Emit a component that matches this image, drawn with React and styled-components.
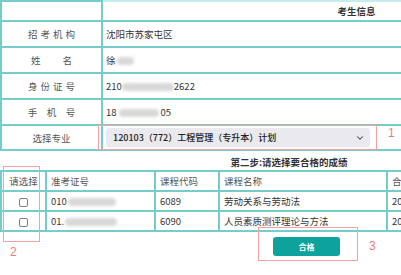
import React from "react";
import styled, { createGlobalStyle } from "styled-components";
import { ChevronDown } from "lucide-react";

const Global = createGlobalStyle`
  html, body { margin: 0; padding: 0; background: #fff; overflow: hidden; }
  body { font-family: "Noto Sans CJK SC", "Noto Sans", sans-serif; }
`;

const TEAL = "#74cccb";
const RED = "#f3a1a1";

const Page = styled.div`
  position: relative;
  width: 401px;
  height: 275px;
  overflow: hidden;
`;

const Sheet = styled.div`
  width: 612px;
  display: flex;
  flex-direction: column;
`;

const Table = styled.table`
  border-collapse: collapse;
  width: ${(p) => p.$w}px;
  table-layout: fixed;
  font-size: 9.5px;
  line-height: 12px;
  color: #333;
`;

const Cell = styled.td`
  border: 2px solid ${TEAL};
  height: ${(p) => p.$h || 22}px;
  padding: 0 0 0 ${(p) => p.$pl ?? 4}px;
  text-align: ${(p) => p.$align || "left"};
  vertical-align: middle;
  white-space: nowrap;
  overflow: hidden;
  color: ${(p) => (p.$muted ? "#555" : "#333")};
`;

const HeadCell = styled(Cell)`
  font-weight: 700;
  text-align: center;
  padding: 0;
  border-top-color: #c7ecec;
`;

const Label = styled.span`
  display: inline-block;
  letter-spacing: ${(p) => p.$ls || 0}px;
  padding-left: ${(p) => p.$ls || 0}px;
  color: #555;
`;

const Blur = styled.span`
  display: inline-block;
  width: ${(p) => p.$w}px;
  height: 8px;
  margin: 0 ${(p) => p.$m ?? 1}px;
  vertical-align: middle;
  background: #d8d8d8;
  border-radius: 4px;
  filter: blur(1.5px);
`;

const SelectBox = styled.div`
  width: 264px;
  height: 19px;
  box-sizing: border-box;
  display: flex;
  align-items: center;
  justify-content: space-between;
  padding: 0 5px 0 7px;
  background: #e9e9ee;
  border-radius: 3px;
  font-size: 9px;
  font-weight: 500;
  color: #222;
`;

const StepTitle = styled.div`
  width: 578px;
  text-align: center;
  font-size: 9.5px;
  font-weight: 700;
  color: #333;
  line-height: 12px;
  padding: 5px 0 2px;
`;

const Check = styled.span`
  display: inline-block;
  width: 7px;
  height: 7px;
  border: 1.5px solid #7d7d8a;
  border-radius: 2px;
  vertical-align: middle;
`;

const ButtonRow = styled.div`
  display: flex;
  justify-content: center;
  padding-top: 5px;
`;

const PassButton = styled.button`
  width: 67px;
  height: 19px;
  border: none;
  border-radius: 3px;
  background: #0da39c;
  color: #fff;
  font-family: inherit;
  font-size: 8px;
  font-weight: 700;
  padding: 0;
  margin-left: 1px;
`;

const Mark = styled.div`
  position: absolute;
  left: ${(p) => p.$x}px;
  top: ${(p) => p.$y}px;
  width: ${(p) => p.$w}px;
  height: ${(p) => p.$h}px;
  border: 1.5px solid ${RED};
  box-sizing: border-box;
  pointer-events: none;
`;

const Num = styled.div`
  position: absolute;
  left: ${(p) => p.$x}px;
  top: ${(p) => p.$y}px;
  color: #f27c7c;
  font-family: "Liberation Sans", sans-serif;
  font-size: 12px;
  line-height: 14px;
`;

const info = [
  { label: "招考机构", ls: 3, value: "沈阳市苏家屯区" },
  { label: "姓名", ls: 22, value: <>徐<Blur $w={17} /></> },
  { label: "身份证号", ls: 3, value: <>210<Blur $w={52} $m={0} />2622</> },
  { label: "手机号", ls: 9.5, value: <>18<Blur $w={40} $m={2} />05</> },
];

const rows = [
  { id: <>010<Blur $w={48} /></>, code: "6089", name: "劳动关系与劳动法" },
  { id: <>01.<Blur $w={52} /></>, code: "6090", name: "人员素质测评理论与方法" },
];

export default function App() {
  return (
    <Page>
      <Global />
      <Sheet>
        <Table $w={612}>
          <colgroup>
            <col style={{ width: 101 }} />
            <col />
          </colgroup>
          <tbody>
            <tr>
              <Cell $h={18} />
              <HeadCell $h={18} style={{ borderLeftColor: "transparent" }}>考生信息</HeadCell>
            </tr>
            {info.map((r) => (
              <tr key={r.label}>
                <Cell $h={24} $align="center" $pl={0}><Label $ls={r.ls}>{r.label}</Label></Cell>
                <Cell $h={24} $pl={3}>{r.value}</Cell>
              </tr>
            ))}
            <tr>
              <Cell $h={23} $align="center" $pl={0}><Label>选择专业</Label></Cell>
              <Cell $h={23} $pl={3}>
                <SelectBox>
                  <span>120103（772）工程管理（专升本）计划</span>
                  <ChevronDown size={10} strokeWidth={2.5} color="#444" />
                </SelectBox>
              </Cell>
            </tr>
          </tbody>
        </Table>
        <StepTitle>第二步:请选择要合格的成绩</StepTitle>
        <Table $w={612}>
          <colgroup>
            <col style={{ width: 45 }} />
            <col style={{ width: 109 }} />
            <col style={{ width: 64 }} />
            <col style={{ width: 168 }} />
            <col />
          </colgroup>
          <tbody>
            <tr>
              <Cell $h={18} $align="center" $pl={0} $muted>请选择</Cell>
              <Cell $h={18} $muted>准考证号</Cell>
              <Cell $h={18} $muted>课程代码</Cell>
              <Cell $h={18} $muted>课程名称</Cell>
              <Cell $h={18} $muted>合格时间</Cell>
            </tr>
            {rows.map((r) => (
              <tr key={r.code}>
                <Cell $h={18} $align="center" $pl={0}><Check /></Cell>
                <Cell $h={18}>{r.id}</Cell>
                <Cell $h={18}>{r.code}</Cell>
                <Cell $h={18}>{r.name}</Cell>
                <Cell $h={18}>2019-04</Cell>
              </tr>
            ))}
          </tbody>
        </Table>
        <ButtonRow>
          <PassButton>合格</PassButton>
        </ButtonRow>
      </Sheet>
      <Mark $x={98} $y={125} $w={279} $h={25} />
      <Num $x={388} $y={126}>1</Num>
      <Mark $x={3} $y={166} $w={37} $h={76} />
      <Num $x={10} $y={245}>2</Num>
      <Mark $x={258} $y={227} $w={100} $h={34} />
      <Num $x={369} $y={239}>3</Num>
    </Page>
  );
}
